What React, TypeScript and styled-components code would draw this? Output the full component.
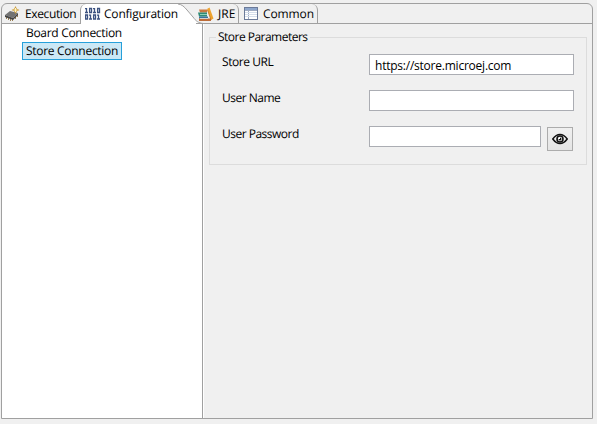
import React from 'react';
import styled, { createGlobalStyle } from 'styled-components';

const GlobalStyle = createGlobalStyle`
  *, *::before, *::after { box-sizing: border-box; }
  html, body { margin: 0; background: #f0f0f0; }
  body { font: 12px/16px "Open Sans", "Noto Sans", sans-serif; color: #000; overflow: hidden; text-rendering: geometricPrecision; }
`;

const Page = styled.div`
  height: 424px;
  padding: 3px 4px 5px 1px;
  background: #f0f0f0;
`;
const Folder = styled.div`
  display: flex;
  flex-direction: column;
  height: 416px;
  border: 1px solid #a0a0a0;
  border-radius: 6px 6px 0 0;
`;
const TabBar = styled.div`
  display: flex;
  height: 20px;
  flex: none;
`;
const Tab = styled.div<{ $w: number; $pad: number; $edge?: boolean }>`
  display: flex;
  align-items: flex-start;
  flex: none;
  width: ${p => p.$w}px;
  padding: 2px 0 0 ${p => p.$pad}px;
  border-bottom: 1px solid #a0a0a0;
  ${p => p.$edge && 'border-right: 1px solid #a0a0a0; border-top-right-radius: 6px;'}
`;
const ActiveTab = styled(Tab)`
  background: #fff;
  border-bottom: 0;
  border-left: 1px solid #a0a0a0;
  border-top-left-radius: 6px;
`;
const TabFill = styled.div`
  flex: 1;
  border-bottom: 1px solid #a0a0a0;
`;
const Swoosh = styled.svg`
  flex: none;
  width: 26px;
  height: 20px;
  margin-right: -8px;
`;
const Icon = styled.svg`
  flex: none;
  width: 16px;
  height: 16px;
`;
const Text = styled.span<{ $ls?: number; $gap?: number }>`
  white-space: nowrap;
  letter-spacing: ${p => p.$ls ?? 0}px;
  margin-left: ${p => p.$gap ?? 0}px;
`;
const Body = styled.div`
  display: flex;
  flex: 1;
`;
const Tree = styled.div`
  display: flex;
  flex: none;
  flex-direction: column;
  align-items: flex-start;
  width: 201px;
  padding-left: 20px;
  background: #fff;
  border-right: 1px solid #a0a0a0;
`;
const TreeItem = styled.div<{ $selected?: boolean }>`
  height: 18px;
  padding: 0 3px;
  border: 1px solid ${p => (p.$selected ? '#26a0da' : 'transparent')};
  background: ${p => (p.$selected ? '#cbe8f6' : 'transparent')};
`;
const Panel = styled.div`
  flex: 1;
  min-width: 0;
  padding: 5px 5px 0 5px;
  border-left: 1px solid #fff;
`;
const Group = styled.fieldset`
  height: 136px;
  margin: 0;
  padding: 8px 0 0 12px;
  border: 1px solid #dcdcdc;
  min-width: 0;
`;
const Legend = styled.legend`
  height: 16px;
  margin-left: -6px;
  padding: 0 3px 0 2px;
`;
const Row = styled.div`
  display: flex;
  height: 36px;
`;
const Label = styled.label`
  width: 147px;
  flex: none;
  padding-top: 1px;
`;
const Field = styled.input<{ $w: number }>`
  width: ${p => p.$w}px;
  height: 21px;
  margin: 1px 6px 0 0;
  padding: 1px 5px 0;
  border: 1px solid #abadb3;
  border-radius: 0;
  background: #fff;
  color: #000;
  font: inherit;
  letter-spacing: -0.23px;
  outline: 0;
`;
const EyeButton = styled.button`
  display: flex;
  align-items: center;
  justify-content: center;
  width: 26px;
  height: 24px;
  margin: 2px 0 0;
  padding: 0;
  border: 1px solid #acacac;
  background: linear-gradient(#f0f0f0, #e5e5e5);
`;

const ChipIcon = () => (
  <Icon viewBox="0 0 16 16">
    <path d="M2.500 10v3M4.500 11v3M6.500 12v3M8.500 12v3M11.500 10v3M13.500 8v3" stroke="#9a8055" />
    <path d="M1 9l5-4 8 2-5 5z" fill="#737373" />
    <path d="M1 9l8 3 5-5v2l-5 5-8-3z" fill="#444" />
    <path d="M11.500 0l1.300 2.700L15.500 4l-2.700 1.300L11.500 8l-1.300-2.700L7.500 4l2.700-1.300z" fill="#c99a3c" />
    <path d="M11.500 2v4M9.500 4h4" stroke="#fff4c0" />
  </Icon>
);
const BinaryIcon = () => (
  <Icon viewBox="0 0 16 16">
    <g stroke="#3c5280" strokeWidth="1.300" fill="none">
      <path d="M1.500 2v4.500M0 2.700h1.500M0 6.500h3M9.500 2v4.500M8 2.700h1.500M8 6.500h3" />
      <path d="M5.500 8.500v4.500M4 9.200h1.500M4 13h3M13.500 8.500v4.500M12 9.200h1.500M12 13h3" />
      <path d="M4.600 2.500h1.900v4h-1.900zM12.600 2.500h1.900v4h-1.900zM.6 9h1.900v4h-1.900zM8.600 9h1.900v4h-1.900z" />
    </g>
  </Icon>
);
const BooksIcon = () => (
  <Icon viewBox="0 0 16 16">
    <path d="M1 3.500h8v3H2z" fill="#c87942" />
    <path d="M0 6.500h9v4H1z" fill="#2f8a76" />
    <path d="M2 8.500h7" stroke="#8fd0b8" />
    <path d="M1 10.500h9v2H1z" fill="#38759c" />
    <path d="M1 12.500h12v2.500H1z" fill="#bd6c38" />
    <path d="M2 12.500h8" stroke="#e9eef0" strokeWidth=".7" />
    <path d="M9 3l2.500-1.500 4 11-2.500 1.500z" fill="#eda32e" />
    <path d="M9.500 4l3.500 10" stroke="#b96a1c" strokeWidth=".7" />
  </Icon>
);
const TableIcon = () => (
  <Icon viewBox="0 0 16 16" shapeRendering="crispEdges">
    <path d="M1.500 1.500h13v12h-13z" fill="#fff" stroke="#6b7a99" />
    <path d="M2 2h12v2H2z" fill="#8da6cc" />
    <path d="M2 4.500h12M5.500 4v9" stroke="#9fabc2" />
    <path d="M2 6.500h12M2 8.500h12M2 10.500h12" stroke="#d5deeb" />
  </Icon>
);
const EyeIcon = () => (
  <Icon viewBox="0 0 16 16">
    <path d="M.8 8Q4 3.500 8 3.500T15.200 8Q12 12.500 8 12.500T.8 8z" fill="#eee" stroke="#111" strokeWidth="1.500" />
    <circle cx="8" cy="8" r="3" fill="#fff" stroke="#111" strokeWidth="1.600" />
    <path d="M8 6.500a1.500 1.500 0 1 1-1.500 1.500H8z" fill="#111" />
  </Icon>
);

export default function App() {
  return (
    <Page>
      <GlobalStyle />
      <Folder>
        <TabBar>
          <Tab $w={78} $pad={2}>
            <ChipIcon /><Text $gap={5} $ls={-0.38}>Execution</Text>
          </Tab>
          <ActiveTab $w={98} $pad={4}>
            <BinaryIcon /><Text $gap={3} $ls={-0.2}>Configuration</Text>
          </ActiveTab>
          <Swoosh viewBox="0 0 26 20">
            <path d="M0 0C5 0.500 7 3 11 8S18 19.500 25.500 19.500V20H0z" fill="#fff" />
            <path d="M0 0C4 0.500 6 2.500 9 6L15 13C18 17 20 19 25.500 19.500" fill="none" stroke="#a0a0a0" />
          </Swoosh>
          <Tab $w={43} $pad={2} $edge>
            <BooksIcon /><Text $gap={4} $ls={0}>JRE</Text>
          </Tab>
          <Tab $w={79} $pad={4} $edge>
            <TableIcon /><Text $gap={4} $ls={-0.1}>Common</Text>
          </Tab>
          <TabFill />
        </TabBar>
        <Body>
          <Tree>
            <TreeItem><Text $ls={-0.31}>Board Connection</Text></TreeItem>
            <TreeItem $selected><Text $ls={-0.29}>Store Connection</Text></TreeItem>
          </Tree>
          <Panel>
            <Group>
              <Legend><Text $ls={-0.52}>Store Parameters</Text></Legend>
              <Row>
                <Label><Text $ls={-0.45}>Store URL</Text></Label>
                <Field $w={205} defaultValue="https://store.microej.com" />
              </Row>
              <Row>
                <Label><Text $ls={-0.5}>User Name</Text></Label>
                <Field $w={205} />
              </Row>
              <Row>
                <Label><Text $ls={-0.5}>User Password</Text></Label>
                <Field $w={172} />
                <EyeButton aria-label="Show password"><EyeIcon /></EyeButton>
              </Row>
            </Group>
          </Panel>
        </Body>
      </Folder>
    </Page>
  );
}
